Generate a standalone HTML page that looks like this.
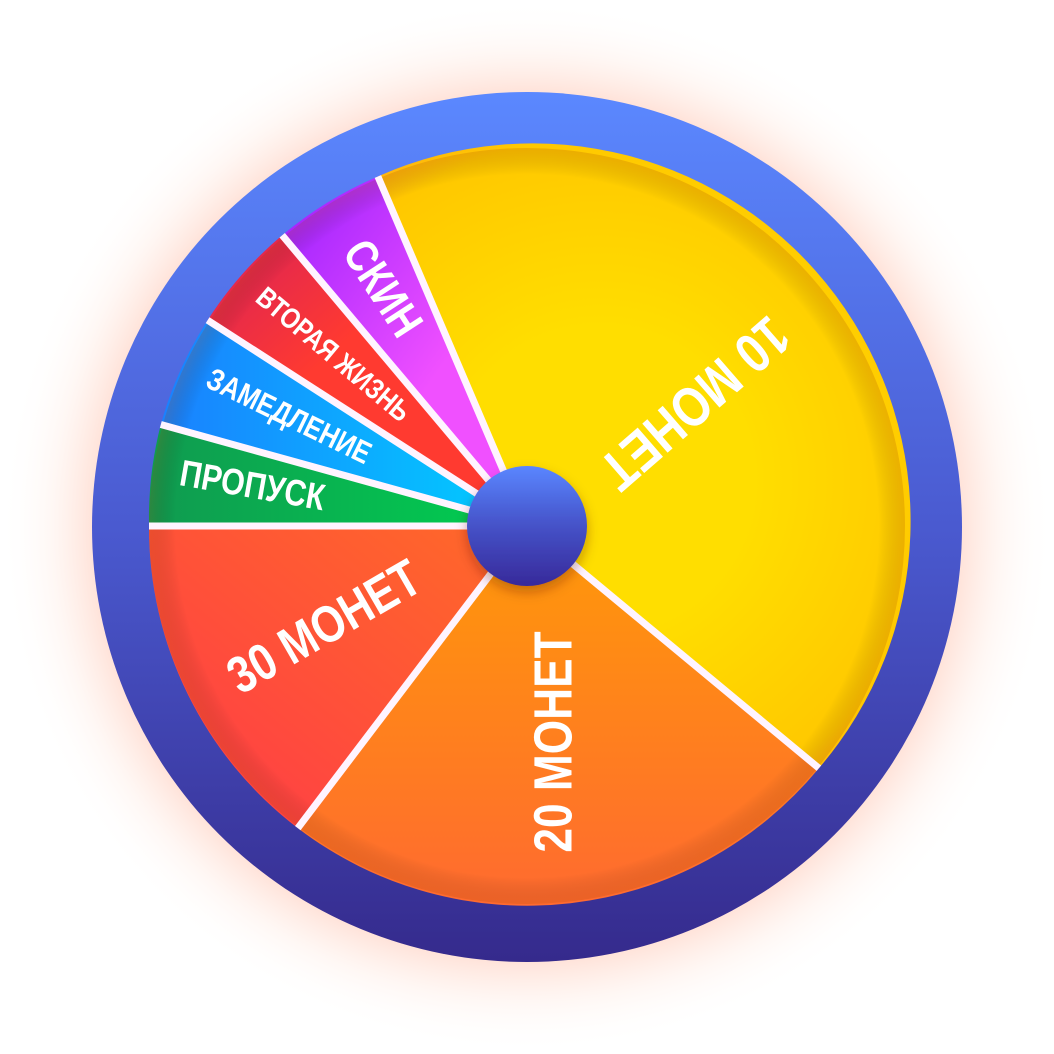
<!DOCTYPE html>
<html><head><meta charset="utf-8"><style>
html,body{margin:0;padding:0;background:#fff;width:1054px;height:1054px;overflow:hidden}
text{font-family:"Liberation Sans Narrow","Liberation Sans",sans-serif;font-weight:bold;fill:#fff}
</style></head><body>
<svg width="1054" height="1054" viewBox="0 0 1054 1054" xmlns="http://www.w3.org/2000/svg">
<defs>
<radialGradient id="glow" cx="527" cy="527" r="527" gradientUnits="userSpaceOnUse">
<stop offset="0.8" stop-color="#ff7a50" stop-opacity="0.28"/>
<stop offset="0.9" stop-color="#ffb090" stop-opacity="0.1"/>
<stop offset="1" stop-color="#fff" stop-opacity="0"/>
</radialGradient>
<linearGradient id="ring" x1="0" y1="0" x2="0" y2="1">
<stop offset="0" stop-color="#5b88ff"/><stop offset="0.5" stop-color="#4a5ad0"/><stop offset="1" stop-color="#352a8c"/>
</linearGradient>
<linearGradient id="hub" x1="0" y1="0" x2="0" y2="1">
<stop offset="0" stop-color="#5a86ff"/><stop offset="0.5" stop-color="#4552c8"/><stop offset="1" stop-color="#37299a"/>
</linearGradient>
<radialGradient id="yel" cx="600" cy="480" r="380" gradientUnits="userSpaceOnUse">
<stop offset="0.4" stop-color="#ffde00"/><stop offset="0.9" stop-color="#ffc800"/><stop offset="1" stop-color="#ffb410"/>
</radialGradient>
<linearGradient id="org" x1="0" y1="0" x2="0" y2="1">
<stop offset="0" stop-color="#ff9a08"/><stop offset="1" stop-color="#ff6a30"/>
</linearGradient>
<linearGradient id="ro" x1="1" y1="0" x2="0" y2="1">
<stop offset="0" stop-color="#ff6a28"/><stop offset="1" stop-color="#ff3a48"/>
</linearGradient>
<linearGradient id="grn" x1="0" y1="0" x2="1" y2="0"><stop offset="0" stop-color="#109a50"/><stop offset="1" stop-color="#00d050"/></linearGradient>
<linearGradient id="blu" x1="0" y1="0" x2="1" y2="0"><stop offset="0" stop-color="#1a80ff"/><stop offset="1" stop-color="#00d0ff"/></linearGradient>
<linearGradient id="red" x1="0" y1="0" x2="1" y2="1"><stop offset="0" stop-color="#d8205a"/><stop offset="0.4" stop-color="#ff3a30"/></linearGradient>
<linearGradient id="pur" x1="0" y1="0" x2="1" y2="1"><stop offset="0" stop-color="#9a20ff"/><stop offset="0.6" stop-color="#f050ff"/></linearGradient>
<radialGradient id="shade" cx="527" cy="526" r="378" gradientUnits="userSpaceOnUse">
<stop offset="0.93" stop-color="#000" stop-opacity="0"/><stop offset="1" stop-color="#a04000" stop-opacity="0.2"/>
</radialGradient>
<filter id="sh" x="-20%" y="-20%" width="140%" height="140%"><feDropShadow dx="0" dy="6" stdDeviation="6" flood-color="#5a2000" flood-opacity="0.35"/></filter>
</defs>
<circle cx="527" cy="527" r="527" fill="url(#glow)"/>
<circle cx="527" cy="527" r="435" fill="url(#ring)"/>
<g>
<path d="M527 526 L377.9 176.5 A378 378 0 0 1 818.9 768.2 Z" fill="url(#yel)"/>
<path d="M527 526 L818.9 768.2 A378 378 0 0 1 297.8 828.1 Z" fill="url(#org)"/>
<path d="M527 526 L297.8 828.1 A378 378 0 0 1 149 526 Z" fill="url(#ro)"/>
<path d="M527 526 L149 526 A378 378 0 0 1 160.8 424.5 Z" fill="url(#grn)"/>
<path d="M527 526 L160.8 424.5 A378 378 0 0 1 207.6 320.2 Z" fill="url(#blu)"/>
<path d="M527 526 L207.6 320.2 A378 378 0 0 1 282.2 235.3 Z" fill="url(#red)"/>
<path d="M527 526 L282.2 235.3 A378 378 0 0 1 377.9 176.5 Z" fill="url(#pur)"/>
<circle cx="527" cy="526" r="378" fill="url(#shade)"/>
<g stroke="#fff4ff" stroke-width="7" stroke-linecap="butt">
<line x1="527" y1="526" x2="377.9" y2="176.5"/>
<line x1="527" y1="526" x2="818.9" y2="768.2"/>
<line x1="527" y1="526" x2="297.8" y2="828.1"/>
<line x1="527" y1="526" x2="149" y2="526"/>
<line x1="527" y1="526" x2="160.8" y2="424.5"/>
<line x1="527" y1="526" x2="207.6" y2="320.2"/>
<line x1="527" y1="526" x2="282.2" y2="235.3"/>
</g>
</g>
<text x="0" y="0" font-size="56" text-anchor="middle" dominant-baseline="middle" transform="translate(692,400) rotate(139) scale(0.82,1)">10 МОНЕТ</text>
<text x="0" y="0" font-size="54" text-anchor="middle" dominant-baseline="middle" transform="translate(557,742) rotate(-90) scale(0.82,1)">20 МОНЕТ</text>
<text x="0" y="0" font-size="52" text-anchor="middle" dominant-baseline="middle" transform="translate(326,630) rotate(-30) scale(0.82,1)">30 МОНЕТ</text>
<text x="0" y="0" font-size="37" text-anchor="middle" dominant-baseline="middle" transform="translate(252,488) rotate(10) scale(0.82,1)">ПРОПУСК</text>
<text x="0" y="0" font-size="31" text-anchor="middle" dominant-baseline="middle" transform="translate(288,418) rotate(26) scale(0.82,1)">ЗАМЕДЛЕНИЕ</text>
<text x="0" y="0" font-size="29" text-anchor="middle" dominant-baseline="middle" transform="translate(332,356) rotate(40) scale(0.82,1)">ВТОРАЯ ЖИЗНЬ</text>
<text x="0" y="0" font-size="46" text-anchor="middle" dominant-baseline="middle" transform="translate(380,290) rotate(57) scale(0.82,1)">СКИН</text>
<circle cx="527" cy="526" r="60" fill="url(#hub)" filter="url(#sh)"/>
</svg>
</body></html>
